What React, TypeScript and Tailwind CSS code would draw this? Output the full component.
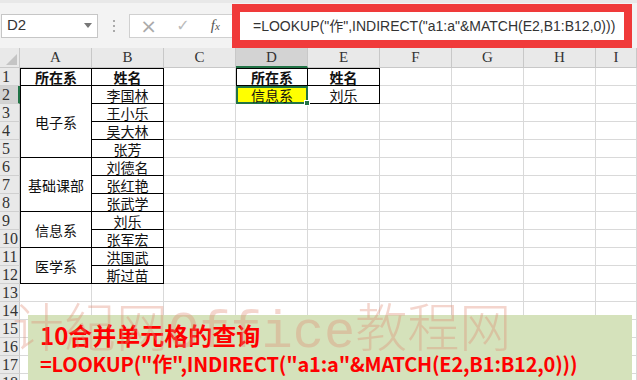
import React from "react";

type CellProps = {
  className?: string;
  children?: React.ReactNode;
};

const gridCell = "border-r border-b border-[#d9d9d9]";
const tableCell = "border-r border-b border-black";

function Cell({ className, children }: CellProps): JSX.Element {
  return (
    <div
      className={`flex items-center justify-center whitespace-nowrap overflow-hidden text-[14px] leading-none text-[#111] ${className ?? ""}`}
    >
      {children}
    </div>
  );
}

function RowHead({ n, active }: { n: number; active?: boolean }): JSX.Element {
  return (
    <div
      className={`flex items-center justify-start pl-[2px] font-['Liberation_Serif',serif] text-[16px] leading-none text-[#333] border-b border-[#d0d0d0] ${
        active
          ? "bg-[#d3d3d3] border-r-2 border-r-[#217346]"
          : "bg-[#e9e9e9] border-r border-r-[#c8c8c8]"
      }`}
    >
      {n}
    </div>
  );
}

function Blank({ count }: { count: number }): JSX.Element {
  return (
    <>
      {Array.from({ length: count }).map((_, i) => (
        <Cell key={i} className={gridCell} />
      ))}
    </>
  );
}

export default function App(): JSX.Element {
  const cols = ["A", "B", "C", "D", "E", "F", "G", "H", "I"];

  // column B names for rows 2..12
  const names = [
    "李国林",
    "王小乐",
    "吴大林",
    "张芳",
    "刘德名",
    "张红艳",
    "张武学",
    "刘乐",
    "张军宏",
    "洪国武",
    "斯过苗",
  ];

  const merged: Record<number, { span: string; label: string }> = {
    2: { span: "row-span-4", label: "电子系" },
    6: { span: "row-span-3", label: "基础课部" },
    9: { span: "row-span-2", label: "信息系" },
    11: { span: "row-span-2", label: "医学系" },
  };

  return (
    <div className="relative w-[637px] h-[380px] overflow-hidden bg-white font-['Noto_Sans_CJK_SC',sans-serif]">
      {/* formula bar */}
      <div className="flex items-center h-[48px] bg-[#f3f3f3] border-t-[3px] border-[#e8e8e8]">
        <div className="ml-[1px] w-[97px] h-[24px] bg-white border border-[#c6c6c6] flex items-center justify-between pl-[5px] pr-[5px]">
          <span className="font-['Liberation_Sans',sans-serif] text-[15px] text-[#333]">D2</span>
          <span className="w-0 h-0 border-l-[4px] border-r-[4px] border-t-[5px] border-l-transparent border-r-transparent border-t-[#777]" />
        </div>
        <div className="w-[31px] flex flex-col items-center gap-[3px]">
          <span className="w-[2px] h-[2px] bg-[#aaa]" />
          <span className="w-[2px] h-[2px] bg-[#aaa]" />
          <span className="w-[2px] h-[2px] bg-[#aaa]" />
        </div>
        <div className="w-[103px] h-[24px] bg-white border border-[#d0d0d0] border-r-0 flex items-center">
          <span className="w-[38px] text-center text-[20px] leading-none text-[#aaa] font-['DejaVu_Sans',sans-serif]">×</span>
          <span className="w-[32px] text-center text-[16px] leading-none text-[#bbb] font-['DejaVu_Sans',sans-serif]">✓</span>
          <span className="w-[34px] text-center text-[15px] leading-none italic text-[#555] font-['Liberation_Serif',serif]">
            f<span className="text-[11px]">x</span>
          </span>
        </div>
        <div className="self-end w-[400px] h-[44px] border-[8px] border-[#f03a3a] bg-white flex items-center pl-[13px]">
          <span className="font-['Liberation_Sans','Noto_Sans_CJK_SC',sans-serif] text-[14px] text-[#333]">
            =LOOKUP("作",INDIRECT("a1:a"&amp;MATCH(E2,B1:B12,0)))
          </span>
        </div>
      </div>

      {/* sheet */}
      <div className="grid grid-cols-[20px_repeat(8,72px)_1fr] grid-rows-[20px_repeat(18,18px)]">
        <div className="relative bg-[#e9e9e9] border-r border-b border-[#c8c8c8]">
          <span className="absolute right-[2px] bottom-[2px] w-0 h-0 border-b-[11px] border-l-[11px] border-b-[#c4c4c4] border-l-transparent" />
        </div>
        {cols.map((c) => (
          <div
            key={c}
            className={`flex items-center justify-center font-['Liberation_Serif',serif] text-[15px] text-[#333] border-r border-[#c8c8c8] ${
              c === "D"
                ? "bg-[#d3d3d3] border-b-2 border-b-[#217346]"
                : "bg-[#e9e9e9] border-b border-b-[#c8c8c8]"
            }`}
          >
            {c}
          </div>
        ))}

        {/* row 1 */}
        <RowHead n={1} />
        <Cell className={`${tableCell} border-l border-t font-bold`}>所在系</Cell>
        <Cell className={`${tableCell} border-t font-bold`}>姓名</Cell>
        <Cell className={gridCell} />
        <Cell className={`${tableCell} border-l border-t font-bold`}>所在系</Cell>
        <Cell className={`${tableCell} border-t font-bold`}>姓名</Cell>
        <Blank count={4} />

        {names.map((name, i) => {
          const r = i + 2;
          const m = merged[r];
          return (
            <React.Fragment key={r}>
              <RowHead n={r} active={r === 2} />
              {m && <Cell className={`${m.span} ${tableCell} border-l`}>{m.label}</Cell>}
              <Cell className={tableCell}>{name}</Cell>
              <Cell className={gridCell} />
              {r === 2 ? (
                <>
                  <Cell className="relative overflow-visible bg-[#ffff00] border-2 border-[#217346]">
                    信息系
                    <span className="absolute -right-[4px] -bottom-[4px] w-[6px] h-[6px] bg-[#217346] border border-white" />
                  </Cell>
                  <Cell className={tableCell}>刘乐</Cell>
                </>
              ) : (
                <Blank count={2} />
              )}
              <Blank count={4} />
            </React.Fragment>
          );
        })}

        {[13, 14, 15, 16, 17, 18].map((r) => (
          <React.Fragment key={r}>
            <RowHead n={r} />
            <Blank count={9} />
          </React.Fragment>
        ))}
      </div>

      {/* note banner */}
      <div className="absolute left-[28px] top-[315px] w-[604px] h-[70px] bg-[#d5e2bb] pl-[12px] pt-[4px] text-[#ff0000] font-bold font-['Noto_Sans_CJK_SC',sans-serif]">
        <div className="text-[24px] leading-[32px]">10合并单元格的查询</div>
        <div className="text-[20px] leading-[26px] tracking-[-0.2px]">
          =LOOKUP("作",INDIRECT("a1:a"&amp;MATCH(E2,B1:B12,0)))
        </div>
      </div>

      {/* watermark */}
      <div className="absolute left-[12px] top-[304px] pointer-events-none whitespace-nowrap text-[52px] leading-[60px] text-[#e08a72] opacity-35 font-['Liberation_Mono','Noto_Sans_CJK_SC',monospace] font-light">
        计紀网Office教程网
      </div>
    </div>
  );
}
